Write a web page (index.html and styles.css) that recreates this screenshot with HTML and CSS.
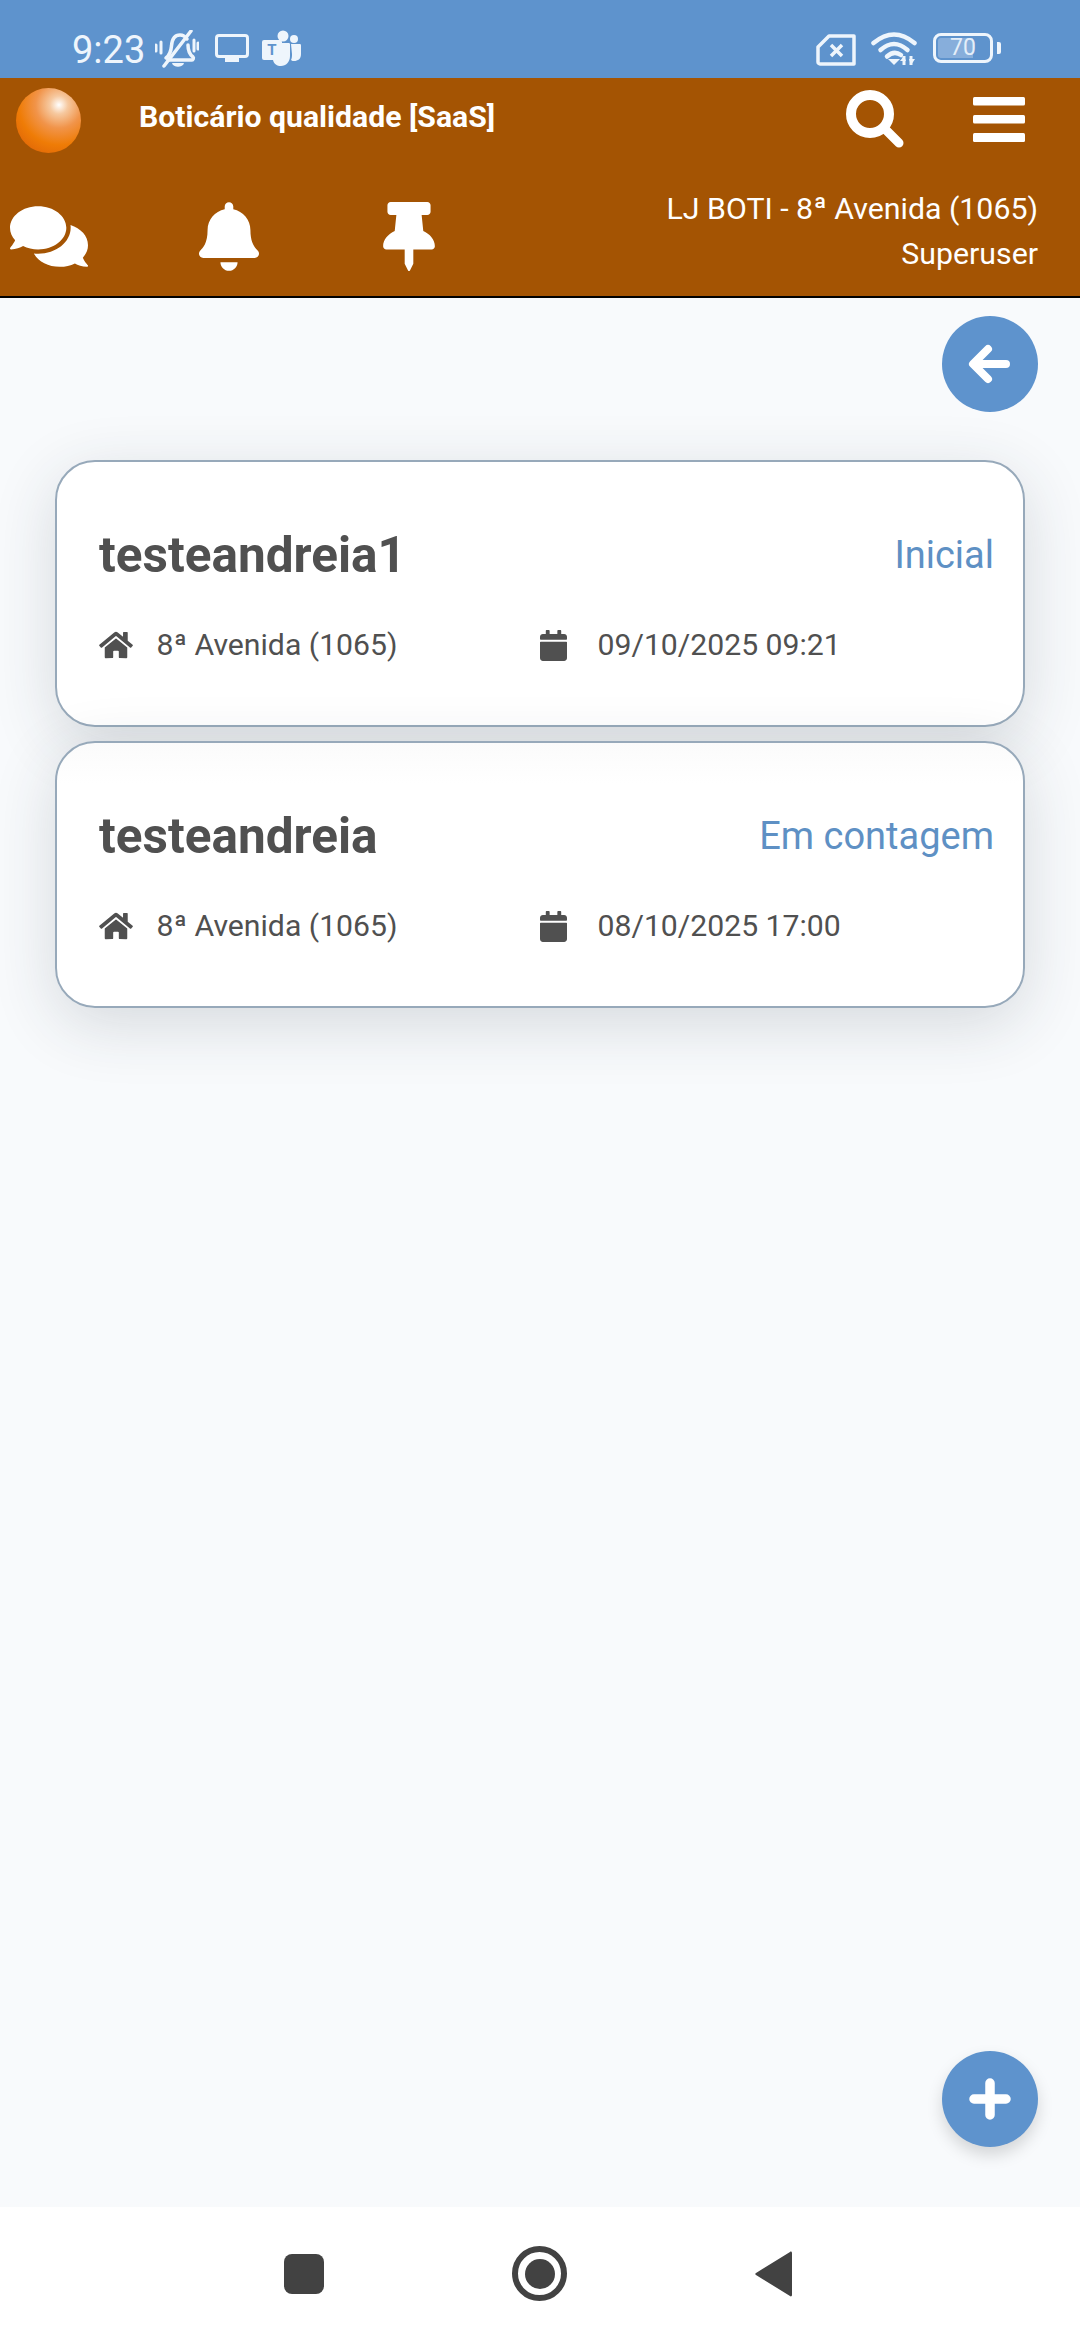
FILE: index.html
```html
<!DOCTYPE html>
<html lang="pt-BR">
<head>
    <meta charset="UTF-8">
    <meta name="viewport" content="width=device-width, initial-scale=1.0">
    <title>Botic&aacute;rio qualidade [SaaS]</title>
    <link rel="stylesheet" href="styles.css">
</head>
<body>
    <div class="status-bar">
        <div class="status-left">
            <span class="status-time">9:23</span>
            <svg class="icon-silent" viewBox="0 0 44 38" fill="none" stroke="#eef5fc" stroke-width="3.500" stroke-linecap="round">
                <path d="M11 28c4-3 5-7 5.500-12C17 9 20 5 25 5c3 0 5 1 7 4M33 15c0 5 1 9 5 12 1 1 0 3-1 3H13"/>
                <path d="M17 33h12c-1 5-11 5-12 0z" fill="#eef5fc" stroke="none"/>
                <path d="M36 1L9 36"/>
                <path d="M6 12v11M1 15v6M39 10v11M43 13v6" stroke-width="3"/>
            </svg>
            <svg class="icon-monitor" viewBox="0 0 34 28" fill="none">
                <rect x="1.500" y="1.500" width="31" height="21" rx="2.500" stroke="#eef5fc" stroke-width="3"/>
                <rect x="10" y="23" width="14" height="5" fill="#eef5fc"/>
            </svg>
            <svg class="icon-teams" viewBox="0 0 39 36" fill="#eef5fc">
                <circle cx="21" cy="6" r="5.500"/>
                <circle cx="32" cy="9" r="4"/>
                <path d="M29 14h9c1 0 1 1 1 2v8c0 5-3 7-7 7-1 0-2 0-3-1 1-2 1-4 1-6z"/>
                <path d="M15 13h12c1 0 1 1 1 2v11c0 6-4 10-9 10-4 0-7-2-8-6h4c2 0 3-1 3-3V15z"/>
                <rect x="0" y="10" width="20" height="20" rx="2"/>
                <text x="10" y="25" class="teams-letter">T</text>
            </svg>
        </div>
        <div class="status-right">
            <svg class="icon-sim" viewBox="0 0 40 32" fill="none" stroke="#eef5fc">
                <path d="M38 2H13L2 13v15c0 1 1 2 2 2h34z" stroke-width="3.500" stroke-linejoin="round"/>
                <path d="M15 11l11 11M26 11L15 22" stroke-width="3.500"/>
            </svg>
            <svg class="icon-wifi" viewBox="0 0 46 34" fill="none" stroke="#eef5fc" stroke-width="4.500" stroke-linecap="round">
                <path d="M2.500 11Q23-6 43.500 11"/>
                <path d="M9.500 18Q23 6 36.500 18"/>
                <path d="M16 24.500Q23 18 30 23"/>
                <path d="M17 27h12l-6 6z" fill="#eef5fc" stroke="none"/>
                <path d="M33 24v9M40 24v9" stroke-width="3" stroke-linecap="butt"/>
                <path d="M29 29h6l-2-5zM38 27h6l-4 6z" fill="#eef5fc" stroke="none"/>
            </svg>
            <div class="battery">
                <div class="battery-body"><span class="battery-level">70</span></div>
                <div class="battery-tip"></div>
            </div>
        </div>
    </div>

    <header class="app-header">
        <div class="header-top">
            <div class="logo"></div>
            <span class="app-title">Botic&aacute;rio qualidade [SaaS]</span>
            <svg class="icon-search" viewBox="0 0 58 58" fill="none" stroke="#fff">
                <circle cx="24" cy="24" r="19" stroke-width="10"/>
                <path d="M39 39l14 14" stroke-width="9" stroke-linecap="round"/>
            </svg>
            <svg class="icon-menu" viewBox="0 0 52 45" fill="#fff">
                <rect y="0" width="52" height="8.500" rx="1.500"/>
                <rect y="18" width="52" height="8.500" rx="1.500"/>
                <rect y="36" width="52" height="9" rx="1.500"/>
            </svg>
        </div>
        <div class="header-bottom">
            <svg class="icon-comments" viewBox="0 0 576 448" fill="#fff">
                <path transform="translate(0 -32)" d="M416 192c0-88.400-93.100-160-208-160S0 103.600 0 192c0 34.300 14.100 65.900 38 92-13.400 30.200-35.500 54.200-35.800 54.500-2.200 2.300-2.800 5.700-1.500 8.700S4.800 352 8 352c36.600 0 66.900-12.300 88.700-25 32.200 15.700 70.300 25 111.300 25 114.900 0 208-71.600 208-160zm122 220c23.900-26 38-57.700 38-92 0-66.900-53.500-124.200-129.300-148.100.9 6.600 1.300 13.300 1.300 20.100 0 105.900-107.700 192-240 192-10.800 0-21.300-.8-31.700-1.900C207.800 439.600 281.800 480 368 480c41 0 79.100-9.200 111.300-25 21.800 12.700 52.100 25 88.700 25 3.200 0 6.100-1.900 7.300-4.800 1.300-2.900.7-6.300-1.500-8.700-.3-.3-22.400-24.200-35.800-54.500z"/>
            </svg>
            <svg class="icon-bell" viewBox="0 0 448 512" fill="#fff">
                <path d="M224 512c35.320 0 63.970-28.650 63.970-64H160.030c0 35.350 28.650 64 63.970 64zm215.390-149.710c-19.320-20.760-55.470-51.990-55.470-154.290 0-77.700-54.480-139.900-127.940-155.160V32c0-17.670-14.320-32-31.980-32s-31.980 14.330-31.980 32v20.840C118.560 68.100 64.080 130.300 64.080 208c0 102.300-36.150 133.530-55.470 154.290-6 6.450-8.660 14.160-8.610 21.710.11 16.400 12.980 32 32.100 32h383.800c19.120 0 32-15.600 32.100-32 .05-7.550-2.610-15.270-8.610-21.710z"/>
            </svg>
            <svg class="icon-pin" viewBox="0 0 384 512" fill="#fff">
                <path d="M298.028 214.267L285.793 96H328c13.255 0 24-10.745 24-24V24c0-13.255-10.745-24-24-24H56C42.745 0 32 10.745 32 24v48c0 13.255 10.745 24 24 24h42.207L85.972 214.267C37.465 236.820 0 277.261 0 328c0 13.255 10.745 24 24 24h136v104.007c0 1.242.289 2.467.845 3.578l24 48c2.941 5.882 11.364 5.893 14.311 0l24-48a8.008 8.008 0 0 0 .845-3.578V352h136c13.255 0 24-10.745 24-24-.001-51.183-37.983-91.420-85.973-113.733z"/>
            </svg>
            <div class="header-user">
                <div>LJ BOTI - 8&ordf; Avenida (1065)</div>
                <div>Superuser</div>
            </div>
        </div>
    </header>

    <main class="content">
        <button class="round-btn back-btn">
            <svg viewBox="0 0 44 40" fill="none" stroke="#fff" stroke-width="8" stroke-linecap="round" stroke-linejoin="round">
                <path d="M38 20H6M20 5L5 20l15 15"/>
            </svg>
        </button>

        <div class="card-list">
            <section class="card">
                <div class="card-head">
                    <h2 class="card-title">testeandreia1</h2>
                    <span class="card-status">Inicial</span>
                </div>
                <div class="card-info">
                    <div class="info-item">
                        <span class="info-icon">
                            <svg class="icon-home" viewBox="0 0 576 512"><path d="M280.370 148.260L96 300.110V464a16 16 0 0 0 16 16l112.060-.29a16 16 0 0 0 15.920-16V368a16 16 0 0 1 16-16h64a16 16 0 0 1 16 16v95.640a16 16 0 0 0 16 16.050L464 480a16 16 0 0 0 16-16V300L295.670 148.260a12.190 12.190 0 0 0-15.300 0zM571.600 251.470L488 182.560V44.050a12 12 0 0 0-12-12h-56a12 12 0 0 0-12 12v72.610L318.470 43a48 48 0 0 0-61 0L4.340 251.470a12 12 0 0 0-1.600 16.900l25.500 31A12 12 0 0 0 45.150 301l235.220-193.740a12.190 12.190 0 0 1 15.300 0L530.900 301a12 12 0 0 0 16.900-1.600l25.500-31a12 12 0 0 0-1.700-16.930z"/></svg>
                        </span>
                        8&ordf; Avenida (1065)
                    </div>
                    <div class="info-item">
                        <span class="info-icon">
                            <svg class="icon-calendar" viewBox="0 0 448 512"><path d="M12 192h424c6.600 0 12 5.400 12 12v260c0 26.500-21.500 48-48 48H48c-26.500 0-48-21.500-48-48V204c0-6.600 5.400-12 12-12zm436-44v-36c0-26.500-21.500-48-48-48h-48V12c0-6.600-5.400-12-12-12h-40c-6.600 0-12 5.400-12 12v52H160V12c0-6.600-5.400-12-12-12h-40c-6.600 0-12 5.400-12 12v52H48C21.500 64 0 85.500 0 112v36c0 6.600 5.400 12 12 12h424c6.600 0 12-5.400 12-12z"/></svg>
                        </span>
                        09/10/2025 09:21
                    </div>
                </div>
            </section>

            <section class="card">
                <div class="card-head">
                    <h2 class="card-title">testeandreia</h2>
                    <span class="card-status">Em contagem</span>
                </div>
                <div class="card-info">
                    <div class="info-item">
                        <span class="info-icon">
                            <svg class="icon-home" viewBox="0 0 576 512"><path d="M280.370 148.260L96 300.110V464a16 16 0 0 0 16 16l112.060-.29a16 16 0 0 0 15.920-16V368a16 16 0 0 1 16-16h64a16 16 0 0 1 16 16v95.640a16 16 0 0 0 16 16.050L464 480a16 16 0 0 0 16-16V300L295.670 148.260a12.190 12.190 0 0 0-15.300 0zM571.600 251.470L488 182.560V44.050a12 12 0 0 0-12-12h-56a12 12 0 0 0-12 12v72.610L318.470 43a48 48 0 0 0-61 0L4.340 251.470a12 12 0 0 0-1.600 16.900l25.500 31A12 12 0 0 0 45.150 301l235.220-193.740a12.190 12.190 0 0 1 15.300 0L530.900 301a12 12 0 0 0 16.900-1.600l25.500-31a12 12 0 0 0-1.700-16.930z"/></svg>
                        </span>
                        8&ordf; Avenida (1065)
                    </div>
                    <div class="info-item">
                        <span class="info-icon">
                            <svg class="icon-calendar" viewBox="0 0 448 512"><path d="M12 192h424c6.600 0 12 5.400 12 12v260c0 26.500-21.500 48-48 48H48c-26.500 0-48-21.500-48-48V204c0-6.600 5.400-12 12-12zm436-44v-36c0-26.500-21.500-48-48-48h-48V12c0-6.600-5.400-12-12-12h-40c-6.600 0-12 5.400-12 12v52H160V12c0-6.600-5.400-12-12-12h-40c-6.600 0-12 5.400-12 12v52H48C21.500 64 0 85.500 0 112v36c0 6.600 5.400 12 12 12h424c6.600 0 12-5.400 12-12z"/></svg>
                        </span>
                        08/10/2025 17:00
                    </div>
                </div>
            </section>
        </div>

        <button class="round-btn add-btn">
            <svg viewBox="0 0 42 42" fill="none" stroke="#fff" stroke-width="9.500" stroke-linecap="round">
                <path d="M21 5v32M5 21h32"/>
            </svg>
        </button>
    </main>

    <nav class="nav-bar">
        <div class="nav-square"></div>
        <div class="nav-circle"><div class="nav-dot"></div></div>
        <svg class="nav-back" viewBox="0 0 37 46" fill="#424242">
            <path d="M35 1L1 22c-1 1-1 1 0 2l34 21c1 1 2 0 2-1V2c0-1-1-2-2-1z"/>
        </svg>
    </nav>
</body>
</html>
```

FILE: styles.css
```css
* {
    box-sizing: border-box;
}
body {
    font-family: Roboto, "Liberation Sans", sans-serif;
    background-color: #f8fafc;
    margin: 0;
    padding: 0;
    width: 1080px;
    height: 2340px;
    display: flex;
    flex-direction: column;
    overflow: hidden;
}
svg {
    display: block;
    flex: none;
}

/* status bar */
.status-bar {
    height: 78px;
    background-color: #5e93cd;
    color: #eef5fc;
    display: flex;
    justify-content: space-between;
    align-items: center;
    padding: 0 79px 0 72px;
}
.status-left, .status-right {
    display: flex;
    align-items: center;
    height: 78px;
}
.status-time {
    font-size: 38px;
    margin-right: 10px;
    margin-top: 22px;
    line-height: 38px;
}
.icon-silent {
    width: 44px;
    height: 38px;
    margin: 20px 16px 0 0;
}
.icon-monitor {
    width: 34px;
    height: 28px;
    margin: 18px 13px 0 0;
}
.icon-teams {
    width: 39px;
    height: 36px;
    margin-top: 18px;
}
.teams-letter {
    font-family: Roboto, sans-serif;
    font-size: 15px;
    font-weight: 700;
    fill: #5e93cd;
    text-anchor: middle;
}
.icon-sim {
    width: 40px;
    height: 32px;
    margin: 21px 15px 0 0;
}
.icon-wifi {
    width: 46px;
    height: 34px;
    margin: 19px 16px 0 0;
}
.battery {
    display: flex;
    align-items: center;
    margin-top: 18px;
}
.battery-body {
    width: 60px;
    height: 30px;
    border: 3px solid #eef5fc;
    border-radius: 8px;
    padding: 2px;
}
.battery-level {
    display: block;
    height: 20px;
    background: linear-gradient(to right, #87aedb 70%, transparent 70%);
    border-radius: 3px;
    font-size: 23px;
    line-height: 20px;
    text-align: center;
    color: #e4eef9;
}
.battery-tip {
    width: 4px;
    height: 12px;
    margin-left: 4px;
    background-color: #eef5fc;
    border-radius: 0 2px 2px 0;
}

/* app header */
.app-header {
    height: 220px;
    background-color: #a45403;
    border-bottom: 2px solid #000;
    color: #fff;
}
.header-top {
    display: flex;
    align-items: flex-start;
    height: 100px;
    padding: 10px 55px 0 16px;
}
.logo {
    width: 65px;
    height: 65px;
    border-radius: 50%;
    background: radial-gradient(circle at 66% 26%, #fff 0, #f6c9a0 14%, #f1944a 36%, #ef7c06 62%, #d85a08 100%);
}
.app-title {
    font-size: 30.2px;
    font-weight: 700;
    line-height: 36px;
    margin: 11px 0 0 58px;
    flex: 1;
}
.icon-search {
    width: 58px;
    height: 58px;
    margin: 2px 69px 0 0;
}
.icon-menu {
    width: 52px;
    height: 45px;
    margin-top: 9px;
}
.header-bottom {
    display: flex;
    align-items: flex-start;
    padding: 0 42px 0 10px;
}
.icon-comments {
    width: 78px;
    height: 61px;
    margin-top: 28px;
}
.icon-bell {
    width: 60px;
    height: 69px;
    margin: 24px 0 0 111px;
}
.icon-pin {
    width: 52px;
    height: 69px;
    margin: 24px 0 0 124px;
}
.header-user {
    flex: 1;
    text-align: right;
    font-size: 30.3px;
    line-height: 45px;
    padding-top: 8px;
}

/* content */
.content {
    flex: 1;
    display: flex;
    flex-direction: column;
    padding: 18px 42px 60px 55px;
}
.round-btn {
    width: 96px;
    height: 96px;
    border-radius: 50%;
    border: 0;
    padding: 0;
    background-color: #5e93cd;
    display: flex;
    align-items: center;
    justify-content: center;
    align-self: flex-end;
}
.back-btn svg {
    width: 44px;
    height: 40px;
}
.add-btn {
    margin-top: auto;
    box-shadow: 0 8px 16px rgba(0, 0, 0, 0.15);
}
.add-btn svg {
    width: 42px;
    height: 42px;
}
.card-list {
    margin-top: 48px;
    margin-right: 13px;
    display: flex;
    flex-direction: column;
    gap: 14px;
}
.card {
    height: 267px;
    background-color: #fff;
    border: 2px solid #97a9ba;
    border-radius: 40px;
    padding: 63px 29px 0 42px;
    box-shadow: 0 16px 64px rgba(40, 50, 60, 0.16);
}
.card + .card {
    background: linear-gradient(#fbfbfb, #fff 40px);
}
.card-head {
    display: flex;
    justify-content: space-between;
    align-items: center;
    height: 60px;
}
.card-title {
    font-size: 49.5px;
    font-weight: 700;
    color: #505050;
    margin: 0;
}
.card-status {
    font-size: 38px;
    color: #5e90c4;
}
.card-info {
    display: grid;
    grid-template-columns: 441px 1fr;
    margin-top: 40px;
}
.info-item {
    display: flex;
    align-items: center;
    font-size: 30.2px;
    line-height: 40px;
    color: #505050;
}
.info-icon {
    width: 57.5px;
    flex: none;
}
.info-icon svg {
    fill: #505050;
}
.icon-home {
    width: 34px;
    height: 30px;
}
.icon-calendar {
    width: 27px;
    height: 31px;
}

/* android nav */
.nav-bar {
    height: 133px;
    background-color: #fff;
    display: flex;
    align-items: center;
    justify-content: center;
    gap: 188px;
    padding-right: 4px;
}
.nav-square {
    width: 40px;
    height: 40px;
    border-radius: 8px;
    background-color: #424242;
}
.nav-circle {
    width: 55px;
    height: 55px;
    border: 6px solid #424242;
    border-radius: 50%;
    display: flex;
    align-items: center;
    justify-content: center;
}
.nav-dot {
    width: 30px;
    height: 30px;
    border-radius: 50%;
    background-color: #424242;
}
.nav-back {
    width: 37px;
    height: 46px;
}
```
